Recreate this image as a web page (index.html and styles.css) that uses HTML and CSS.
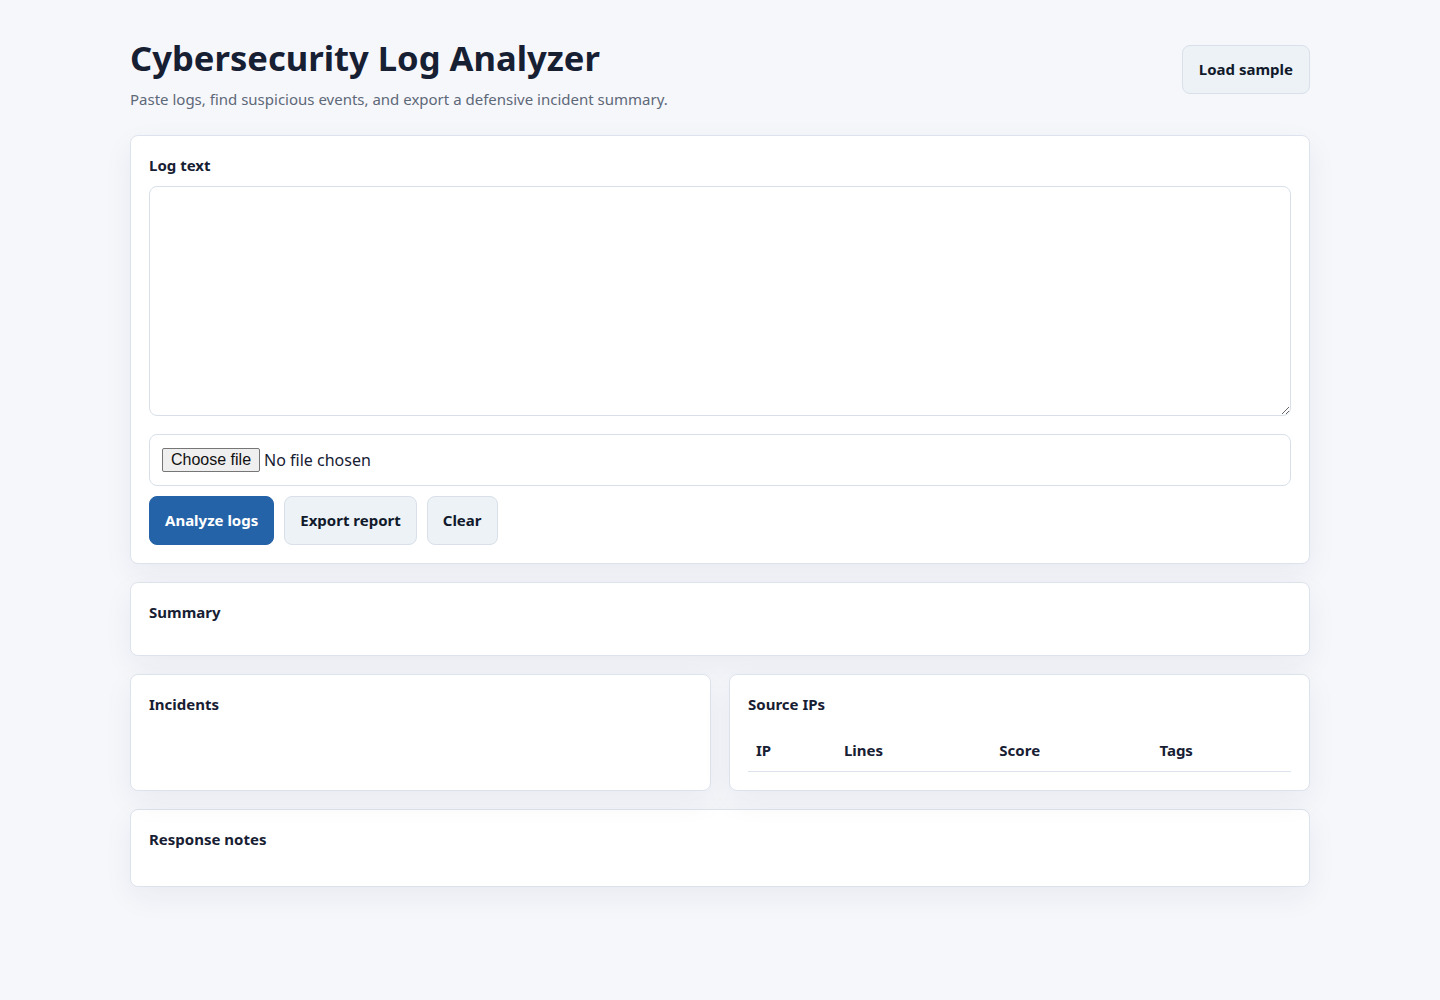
FILE: index.html
```html
<!DOCTYPE html>
<html>
  <head>
    <meta charset="utf-8">
    <title>Cybersecurity Log Analyzer</title>
    <link rel="stylesheet" href="styles.css">
  </head>
  <body>
    <main class="page">
      <header class="top">
        <div>
          <h1>Cybersecurity Log Analyzer</h1>
          <p class="sub">Paste logs, find suspicious events, and export a defensive incident summary.</p>
        </div>
        <button class="btn load">Load sample</button>
      </header>

      <section class="card">
        <label class="label" for="logs">Log text</label>
        <textarea id="logs" class="logs"></textarea>
        <div class="filebox">
          <label class="choose">
            <input type="file" id="file">
            <span class="choose-btn">Choose file</span>
          </label>
          <span class="filename">No file chosen</span>
        </div>
        <div class="actions">
          <button class="btn primary">Analyze logs</button>
          <button class="btn">Export report</button>
          <button class="btn">Clear</button>
        </div>
      </section>

      <section class="card">
        <h2>Summary</h2>
      </section>

      <div class="cols">
        <section class="card">
          <h2>Incidents</h2>
        </section>
        <section class="card">
          <h2>Source IPs</h2>
          <table class="ips">
            <thead>
              <tr>
                <th>IP</th>
                <th>Lines</th>
                <th>Score</th>
                <th>Tags</th>
              </tr>
            </thead>
            <tbody></tbody>
          </table>
        </section>
      </div>

      <section class="card">
        <h2>Response notes</h2>
        <div class="notes"></div>
      </section>
    </main>
  </body>
</html>
```

FILE: styles.css
```css
* {
  box-sizing: border-box;
}

body {
  margin: 0;
  background: #f6f7fb;
  color: #172033;
  font-family: "Segoe UI", "Noto Sans", sans-serif;
  font-size: 16px;
  line-height: 1.4;
}

.page {
  max-width: 1180px;
  margin: 0 auto;
  padding: 34px 0 60px;
}

.top {
  display: flex;
  justify-content: space-between;
  align-items: flex-start;
  margin-bottom: 25px;
}

h1 {
  margin: 0;
  font-size: 34.6px;
  line-height: 48px;
  font-weight: 700;
  color: #172033;
}

.sub {
  margin: 6px 0 0;
  color: #5d6878;
  font-size: 15px;
  line-height: 22px;
}

.btn {
  font: inherit;
  font-size: 15px;
  font-weight: 700;
  line-height: 23px;
  padding: 12px 15px;
  border: 1px solid #d9e0ea;
  border-radius: 8px;
  background: #edf2f7;
  color: #111a2b;
  cursor: pointer;
}

.btn.load {
  margin-top: 11px;
  padding: 12px 16px;
}

.btn.primary {
  background: #2563a8;
  border-color: #2563a8;
  color: #fff;
}

.card {
  background: #fff;
  border: 1px solid #dde3ec;
  border-radius: 8px;
  padding: 18px;
  margin-bottom: 18px;
  box-shadow: 0 10px 30px rgba(20, 30, 60, 0.06);
}

.label,
h2 {
  display: block;
  margin: 0 0 10px;
  font-size: 15px;
  line-height: 22px;
  font-weight: 700;
  color: #172033;
}

h2 {
  margin-bottom: 14px;
}

.logs {
  display: block;
  width: 100%;
  height: 230px;
  border: 1px solid #d9dfe8;
  border-radius: 8px;
  padding: 12px;
  font: inherit;
  resize: vertical;
}

.filebox {
  display: flex;
  align-items: center;
  gap: 4px;
  margin-top: 18px;
  border: 1px solid #d9dfe8;
  border-radius: 8px;
  padding: 0 12px;
  height: 52px;
}

.choose input {
  position: absolute;
  width: 1px;
  height: 1px;
  opacity: 0;
}

.choose-btn {
  display: inline-block;
  font-family: "Liberation Sans", Arial, sans-serif;
  font-size: 16px;
  line-height: 20px;
  padding: 1px 8px;
  background: #efefef;
  border: 1px solid #767676;
  border-radius: 2px;
  color: #111;
}

.filename {
  font-size: 16px;
  color: #172033;
}

.actions {
  display: flex;
  gap: 10px;
  margin-top: 10px;
}

.cols {
  display: grid;
  grid-template-columns: 1fr 1fr;
  gap: 18px;
  margin-bottom: 18px;
}

.cols .card {
  margin-bottom: 0;
}

.ips {
  width: 100%;
  border-collapse: collapse;
}

.ips th {
  text-align: left;
  padding: 10px 8px;
  font-size: 15px;
  line-height: 22px;
  border-bottom: 1px solid #dde3ec;
}

.notes {
  height: 4px;
}
```
